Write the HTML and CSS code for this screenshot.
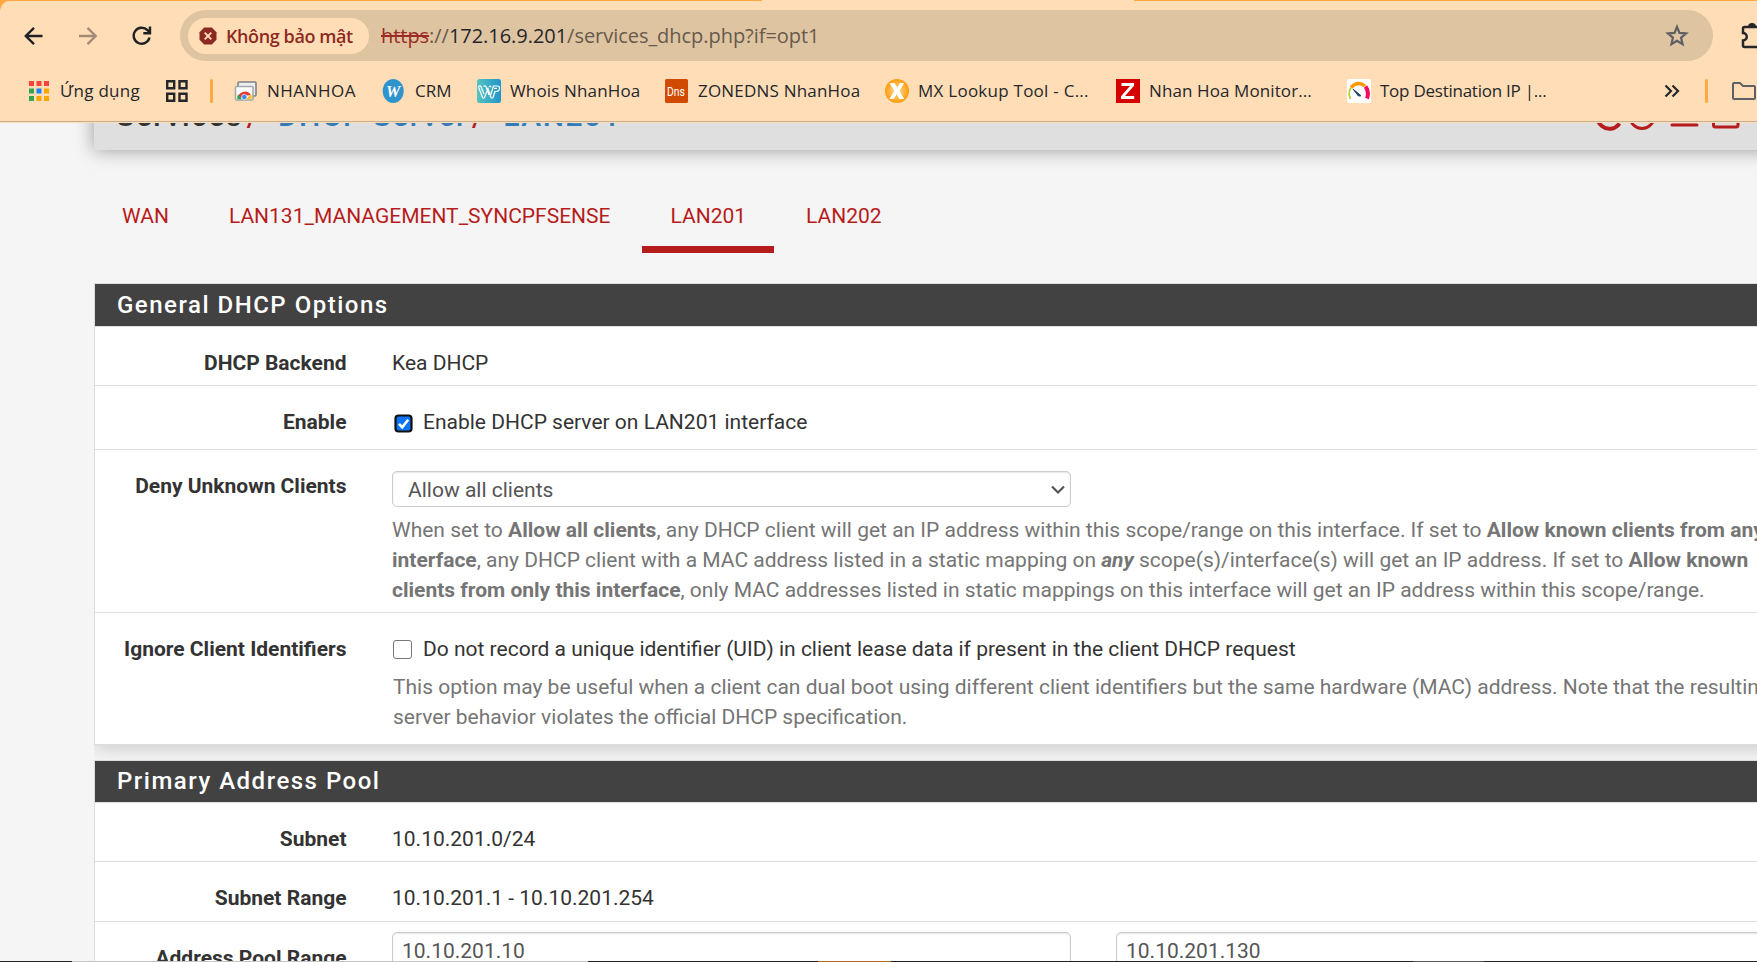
FILE: index.html
```html
<!DOCTYPE html>
<html lang="vi">
<head>
<meta charset="utf-8">
<title>DHCP Server</title>
<link rel="stylesheet" href="styles.css">
</head>
<body>
<div class="window">
<div class="browser">
  <div class="toolbar">
    <svg class="nav" width="20" height="20" viewBox="0 0 20 20"><path d="M18.500 10H2.500M10 1.800 1.800 10l8.200 8.200"/></svg>
    <svg class="nav nav-off" width="20" height="20" viewBox="0 0 20 20"><path d="M1 10h16M9.500 1.800 17.700 10 9.500 18.200"/></svg>
    <svg class="nav" width="20" height="20" viewBox="0 0 20 20"><path d="M17.500 11.500A8 8 0 1 1 15.500 4.200l2 2.100M18 .5v6.700h-6.700"/></svg>
    <div class="omnibox">
      <div class="chip">
        <svg width="18" height="18" viewBox="0 0 18 18"><path d="M5.200.5h7.600l4.700 4.700v7.600l-4.700 4.700H5.200L.5 12.800V5.200z" fill="#8c2a22"/><path d="M5.700 5.700l6.600 6.600M12.300 5.700l-6.600 6.600" stroke="#ffdeb7" stroke-width="1.900"/></svg>
        <span class="chip-text">Không bảo mật</span>
      </div>
      <div class="url"><span class="scheme">https</span>://<span class="host">172.16.9.201</span>/services_dhcp.php?if=opt1</div>
      <svg class="star" width="24" height="24" viewBox="0 0 24 24"><path d="M12 2.800l2.500 6.100 6.600.5-5 4.300 1.500 6.500L12 16.700l-5.600 3.500 1.500-6.500-5-4.300 6.600-.5z" fill="none" stroke="#5f6063" stroke-width="2.200"/></svg>
    </div>
    <svg class="ext" width="18" height="26" viewBox="0 0 18 26"><path d="M24 4H4.500Q3 4 3 5.500V10a3.500 3.500 0 0 1 0 7.500v5q0 1.500 1.500 1.500H24" fill="none" stroke="#25262a" stroke-width="2.500"/><path d="M8 4a4 4 0 0 1 8 0z" fill="#25262a"/></svg>
  </div>
  <div class="bookmarks">
    <div class="bm bm-apps"><svg width="20" height="20" viewBox="0 0 20 20"><path d="M0 0h5v5H0zM7.500 0h5v5h-5zM15 0h5v5h-5z" fill="#f9423a"/><path d="M0 7.500h5v5H0zM0 15h5v5H0z" fill="#34a352"/><path d="M7.500 7.500h5v5h-5z" fill="#1a82f7"/><path d="M15 7.500h5v5h-5zM15 15h5v5h-5zM7.500 15h5v5h-5z" fill="#f6a800"/></svg><span class="t-apps">Ứng dụng</span></div>
    <div class="bm"><svg width="22" height="22" viewBox="0 0 22 22"><path d="M1.200 1.200h7v7h-7zM13.500 1.200h7v7h-7zM1.200 13.700h7v7h-7zM13.500 13.700h7v7h-7z" fill="none" stroke="#25262a" stroke-width="2.400"/></svg></div>
    <div class="sep"></div>
    <div class="bm"><svg width="24" height="24" viewBox="0 0 24 24"><rect x="4" y="3" width="18" height="14" rx="1" fill="#eee" stroke="#7d8084" stroke-width="1.600"/><rect x="1.500" y="7.500" width="17.500" height="13.500" rx="1" fill="#fff" stroke="#a5a7aa" stroke-width="1.600"/><path d="M4 20a7 7 0 0 1 13-4l-7 1z" fill="#e33b2e"/><path d="M3.500 20.200a7 7 0 0 1 .5-5l4 5z" fill="#2ba24c"/><path d="M17 15q1.500 3 .3 5.200H12z" fill="#fbc116"/><circle cx="10.300" cy="18" r="2.700" fill="#4285f4" stroke="#fff" stroke-width=".6"/></svg><span class="t-nh">NHANHOA</span></div>
    <div class="bm"><svg width="24" height="24" viewBox="0 0 24 24"><ellipse cx="11.200" cy="12" rx="10.500" ry="12" fill="#2f93cc"/><text x="11" y="18" class="g-w">W</text></svg><span class="t-crm">CRM</span></div>
    <div class="bm"><svg width="24" height="24" viewBox="0 0 24 24"><defs><linearGradient id="wg"><stop offset="0" stop-color="#55c4c0"/><stop offset="1" stop-color="#2195cb"/></linearGradient></defs><rect width="24" height="24" rx="2.500" fill="url(#wg)"/><path d="M1.500 8 5.500 18.500q1 1.500 2 0L11 9.500l3 9q1 1.500 2 0L18 12.500q4.500.3 4.500-3.500 0-2-2-2h-4l-3.500 11M1.500 8q1-2 2.500-.5L7 15M6.500 7.500q1.500-1.500 2.500 0l3 8.500M12 7.500q1.500-1 2.300.8M17 9.300h3" fill="none" stroke="#fff" stroke-width="1.200"/></svg><span class="t-who">Whois NhanHoa</span></div>
    <div class="bm"><svg width="24" height="24" viewBox="0 0 24 24"><rect width="23" height="24" rx="1.500" fill="#d04a02"/><text x="11" y="17" class="g-dns" textLength="18" lengthAdjust="spacingAndGlyphs">Dns</text></svg><span class="t-zone">ZONEDNS NhanHoa</span></div>
    <div class="bm"><svg width="24" height="24" viewBox="0 0 24 24"><defs><radialGradient id="mg"><stop offset="0" stop-color="#ffd9a0"/><stop offset=".5" stop-color="#ffbd55"/><stop offset="1" stop-color="#ff9c0a"/></radialGradient></defs><circle cx="12" cy="12" r="12" fill="url(#mg)"/><path d="M4.500 4h5l2.700 4.700L15 4h4.300l-4.800 7.800 4.800 8.200h-5l-2.500-4.900L8.800 20H4.300l5-8.100z" fill="#fff"/></svg><span class="t-mx">MX Lookup Tool - C...</span></div>
    <div class="bm"><svg width="24" height="24" viewBox="0 0 24 24"><path d="M0 0h24v24H0z" fill="#d50000"/><path d="M5.500 4H18v2.800L9 17h9.200v3H5v-2.800L14 7H5.500z" fill="#fff"/></svg><span class="t-mon">Nhan Hoa Monitor...</span></div>
    <div class="bm"><svg width="24" height="24" viewBox="0 0 24 24"><rect width="24" height="24" rx="2" fill="#fff"/><path d="M3.500 20Q.5 14 4 8.500" fill="none" stroke="#b5d334" stroke-width="1.800"/><path d="M4 8.500Q11 1.500 18 7" fill="none" stroke="#ff9800" stroke-width="3.400"/><path d="M18.500 7.500q4 5 1.500 12" fill="none" stroke="#f50a62" stroke-width="4"/><path d="M6 10l8 6.800-2.500.2z" fill="#1c3f6e" stroke="#1c3f6e" stroke-width="1"/></svg><span class="t-top">Top Destination IP |...</span></div>
    <div class="bm"><svg width="16" height="14" viewBox="0 0 16 14"><path d="M1.500 1.500 7 7l-5.500 5.500M8.500 1.500 14 7l-5.500 5.500" fill="none" stroke="#25262a" stroke-width="2.200"/></svg></div>
    <div class="sep"></div>
    <div class="bm"><svg width="26" height="20" viewBox="0 0 26 20"><path d="M3 2h6l3 3h11q1 0 1 1v11q0 1-1 1H3q-1 0-1-1V3q0-1 1-1z" fill="none" stroke="#5f6063" stroke-width="2"/></svg></div>
  </div>
</div>

<div class="page">
  <div class="crumbs">
    <span class="c-main">Services</span><span class="slash">/</span><span class="c-link">DHCP Server</span><span class="slash">/</span><span class="c-link">LAN201</span>
    <svg class="actions" width="170" height="30" viewBox="0 0 170 30" fill="none" stroke="#b71c1c" stroke-width="3"><path d="M26.500 22.500A12 12 0 1 1 26 8.500" stroke-width="4"/><circle cx="49" cy="15.500" r="12"/><path d="M79 24h25" stroke-linecap="round"/><rect x="120.500" y="2" width="24.500" height="24" rx="2"/><circle cx="176" cy="15.500" r="12"/></svg>
  </div>
  <nav class="tabs"><a>WAN</a><a>LAN131_MANAGEMENT_SYNCPFSENSE</a><a class="active">LAN201</a><a>LAN202</a></nav>

  <section class="panel">
    <h2>General DHCP Options</h2>
    <div class="row"><label>DHCP Backend</label><div class="body">Kea DHCP</div></div>
    <div class="row row-enable"><label>Enable</label><div class="body check"><svg class="cb-on" width="20" height="20" viewBox="0 0 20 20"><rect x="1.500" y="1.500" width="16" height="16" rx="3" fill="#0b75f5" stroke="#101010" stroke-width="2.200"/><path d="M5 9.800l3.200 3.400 6-7.400" fill="none" stroke="#fff" stroke-width="2.600"/></svg><span>Enable DHCP server on LAN201 interface</span></div></div>
    <div class="row row-deny"><label>Deny Unknown Clients</label><div class="body">
      <div class="field select"><span>Allow all clients</span><svg width="14" height="10" viewBox="0 0 14 10"><path d="M1 1.500l6 6 6-6" fill="none" stroke="#555" stroke-width="2.200"/></svg></div>
      <p class="help">When set to <b>Allow all clients</b>, any DHCP client will get an IP address within this scope/range on this interface. If set to <b>Allow known clients from any<br>interface</b>, any DHCP client with a MAC address listed in a static mapping on <b><i>any</i></b> scope(s)/interface(s) will get an IP address. If set to <b>Allow known<br>clients from only this interface</b>, only MAC addresses listed in static mappings on this interface will get an IP address within this scope/range.</p>
    </div></div>
    <div class="row row-ignore"><label>Ignore Client Identifiers</label><div class="body">
      <div class="check"><span class="cb-off"></span><span>Do not record a unique identifier (UID) in client lease data if present in the client DHCP request</span></div>
      <p class="help">This option may be useful when a client can dual boot using different client identifiers but the same hardware (MAC) address. Note that the resulting<br>server behavior violates the official DHCP specification.</p>
    </div></div>
  </section>

  <section class="panel second">
    <h2>Primary Address Pool</h2>
    <div class="row"><label>Subnet</label><div class="body">10.10.201.0/24</div></div>
    <div class="row row-range"><label>Subnet Range</label><div class="body">10.10.201.1 - 10.10.201.254</div></div>
    <div class="row row-pool"><label>Address Pool Range</label><div class="body inputs"><div class="field">10.10.201.10</div><div class="field">10.10.201.130</div></div></div>
  </section>
</div>
<div class="edge"></div>
</div>
</body>
</html>
```

FILE: styles.css
```css
* { box-sizing: border-box; }
body { margin: 0; background: #f5f5f5; }
.window { width: 1757px; height: 962px; overflow: hidden; display: flex; flex-direction: column; }

/* Browser chrome */
.browser {
  flex: none; height: 123px; padding-top: 10px; border-top-left-radius: 12px;
  background: linear-gradient(#ffa940, #ffa940) 0 0 / 762px 1px no-repeat,
    linear-gradient(#ffa940, #ffa940) 1134px 0 / 623px 1px no-repeat,
    linear-gradient(#c8ae90, #c8ae90) 0 121px / 100% 1px no-repeat, #ffdeb7;
  box-shadow: -12px -12px 0 12px #ffa940;
  font-family: "Open Sans", "Noto Sans", sans-serif; color: #25262a;
  position: relative; z-index: 1;
}
.toolbar { display: flex; align-items: center; height: 51px; padding-left: 24px; }
.nav { flex: none; fill: none; stroke: #202124; stroke-width: 2.400; margin-right: 34px; }
.nav-off { stroke: #a28c78; }
.omnibox {
  flex: none; width: 1533px; height: 51px; margin-left: -6px; padding: 0 24px 0 8px;
  display: flex; align-items: center; border-radius: 26px; background: #dfc4a1;
}
.chip { display: flex; align-items: center; width: 181px; height: 36px; padding-left: 11px; border-radius: 18px; background: #ffdeb7; }
.chip-text { margin-left: 9px; font-size: 18px; font-weight: 600; color: #8c2a22; white-space: nowrap; letter-spacing: -.400px; }
.url { flex: 1; margin-left: 12px; font-size: 20px; color: #665a4d; white-space: nowrap; letter-spacing: -.040px; }
.scheme { color: #9a2c25; text-decoration: line-through; }
.host { color: #25262a; }
.ext { flex: none; margin-left: 27px; }
.bookmarks {
  display: grid; align-items: center; height: 60px; padding-left: 29px;
  grid-template-columns: 137px 44px 24px 148px 95px 188px 220px 231px 231px 317px 41px 26px 30px;
}
.bm { display: flex; align-items: center; gap: 9px; height: 24px; font-size: 17px; white-space: nowrap; }
.bm span { margin-top: -2px; }
.bm-apps { gap: 11px; }
.t-apps { letter-spacing: .3px; }
.t-nh { letter-spacing: .5px; }
.t-who { letter-spacing: .150px; }
.t-zone { letter-spacing: .2px; }
.t-mx { letter-spacing: .250px; }
.t-mon { letter-spacing: .1px; }
.t-top { letter-spacing: -.250px; }
.bm svg { flex: none; }
.sep { width: 3px; height: 24px; border-radius: 2px; background: #ffa940; }
.g-w { font: italic bold 16px "Liberation Serif", serif; fill: #fff; text-anchor: middle; }
.g-dns { font: 13px Roboto, sans-serif; fill: #fff; text-anchor: middle; }

/* Page */
.page { flex: 1; min-height: 0; overflow: hidden; padding-left: 94px; font: 21px/30px Roboto, sans-serif; color: #333; }
.crumbs {
  display: flex; align-items: center; width: 1800px; height: 66px; margin-top: -39px; padding: 0 131px 3px 22px;
  background: #dfdfdf; box-shadow: 0 0 18px rgba(0, 0, 0, .38); font-size: 30px; font-weight: 500; letter-spacing: 1.500px; white-space: nowrap;
}
.slash { margin: 0 18px 0 4px; color: #b71c1c; }
.c-link { color: #337ab7; }
.actions { margin-left: auto; }
.tabs { display: flex; gap: 4px; height: 103px; margin-bottom: 30px; padding-top: 51px; }
.tabs a { height: 52px; padding: 0 28px; border-bottom: 7px solid transparent; color: #b71c1c; }
.tabs .active { border-color: #b71c1c; }
.panel { width: 1800px; border: 1px solid #ddd; background: #fff; box-shadow: 0 3px 18px rgba(0, 0, 0, .18); clip-path: inset(0 0 -15px 0); }
.panel h2 { height: 43px; margin: 0; padding: 6px 22px 0; border-bottom: 1px solid #ddd; background: #424242; color: #fff; font-size: 24px; line-height: 30px; font-weight: 500; letter-spacing: 1.500px; }
.row { display: grid; grid-template-columns: 251.500px 1fr; column-gap: 45.500px; height: 59px; padding-top: 21px; border-bottom: 1px solid #ddd; }
.row label { text-align: right; font-weight: 700; white-space: nowrap; }
.row-enable { height: 64px; }
.row-deny { height: 163px; }
.row-ignore { height: 131px; border-bottom: 0; }
.row-range { height: 60px; }
.row-pool { height: 100px; padding-top: 10px; }
.row-pool label { padding-top: 11px; }
.check { display: flex; align-items: center; white-space: nowrap; }
.row-enable .check { height: 30px; }
.cb-on { margin: 3px 9.500px 0 1.500px; }
.cb-off { width: 19px; height: 19px; margin: 1px 11px 0 1px; border: 1.500px solid #767676; border-radius: 3px; background: #fff; }
.help { margin: 8px 0 0; color: #757575; white-space: nowrap; }
.row-ignore .help { padding-left: 1px; }
.field { width: 679px; height: 36px; padding: 3px 9px; border: 1px solid #ccc; border-radius: 5px; line-height: 30px; color: #555; box-shadow: inset 0 1px 2px rgba(0, 0, 0, .1); }
.select { display: flex; align-items: center; justify-content: space-between; padding: 2px 5px 0 15px; }
.inputs { display: flex; gap: 45px; }
.second { margin-top: 15px; }
.second h2 { height: 42px; padding-top: 5px; }
.edge { flex: none; height: 1px; background: linear-gradient(90deg, #222 72px, #c4c4c4 72px 588px, #222 588px 818px, #b06a20 818px 891px, #222 891px 1413px, #555 1413px 1484px, #222 1484px); }
```
